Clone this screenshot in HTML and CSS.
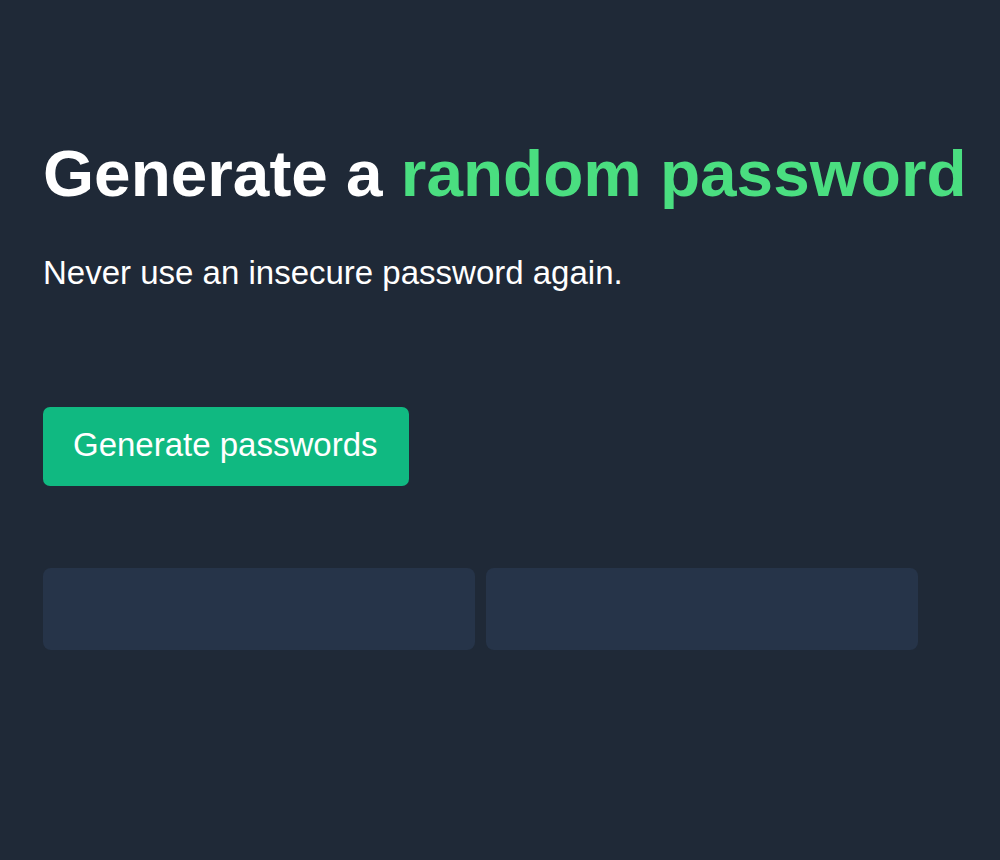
FILE: index.html
```html
<!DOCTYPE html>
<html lang="en">
<head>
<meta charset="utf-8">
<title>Password Generator</title>
<link rel="stylesheet" href="styles.css">
</head>
<body>
<main class="page">
  <h1 class="title">Generate a <span class="accent">random password</span></h1>
  <p class="subtitle">Never use an insecure password again.</p>
  <button class="generate-btn" type="button">Generate passwords</button>
  <div class="results">
    <div class="result-box"></div>
    <div class="result-box"></div>
  </div>
</main>
</body>
</html>
```
FILE: styles.css
```css
html, body {
  margin: 0;
  padding: 0;
  background: #1f2937;
  height: 100%;
}

body {
  font-family: "Liberation Sans", Arial, Helvetica, sans-serif;
  color: #ffffff;
}

.page {
  padding: 135px 0 0 43px;
  display: flex;
  flex-direction: column;
  align-items: flex-start;
}

.title {
  margin: 0;
  font-size: 65.7px;
  font-weight: 700;
  line-height: 1.2;
  white-space: nowrap;
}

.accent {
  color: #4ade80;
}

.subtitle {
  margin: 39px 0 0;
  font-size: 33px;
  line-height: 1.2;
}

.generate-btn {
  margin-top: 115px;
  font-family: inherit;
  font-size: 33px;
  line-height: 1.2;
  color: #ffffff;
  background: #10b981;
  border: none;
  border-radius: 7px;
  padding: 18px 31px 21px 30px;
  cursor: pointer;
}

.results {
  margin-top: 82px;
  display: flex;
  gap: 11px;
}

.result-box {
  width: 432px;
  height: 82px;
  background: #263449;
  border-radius: 8px;
}
```
